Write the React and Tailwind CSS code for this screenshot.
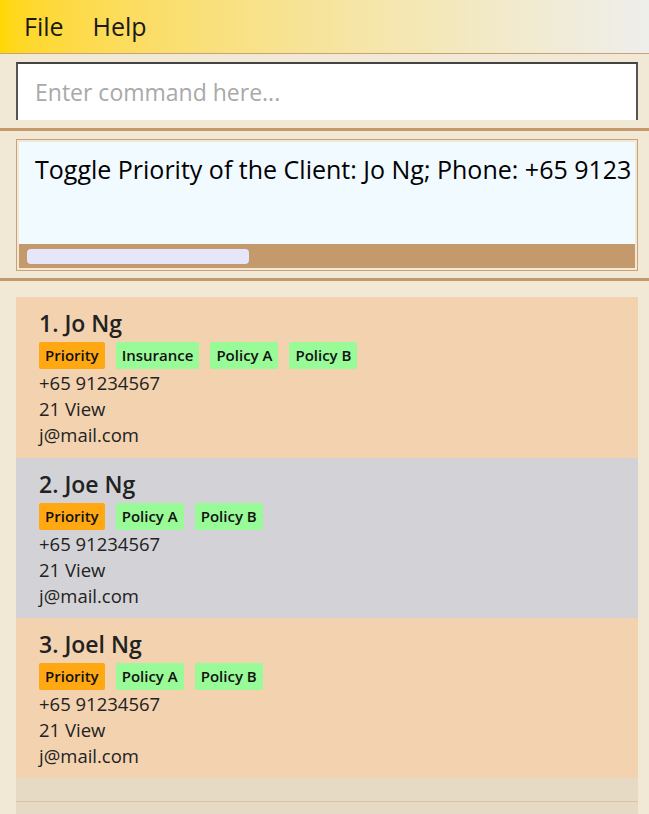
import React from "react"

const clients = [
  { name: "Jo Ng", tags: ["Insurance", "Policy A", "Policy B"], bg: "bg-[#F3D2B0]", h: "h-[161px]" },
  { name: "Joe Ng", tags: ["Policy A", "Policy B"], bg: "bg-[#D3D3D7]", h: "h-[160px]" },
  { name: "Joel Ng", tags: ["Policy A", "Policy B"], bg: "bg-[#F3D2B0]", h: "h-[160px]" },
]

const font = { fontFamily: '"Segoe UI", "Open Sans", sans-serif' }

const ClientCard = ({ index, client }) => (
  <div className={`shrink-0 pl-[23px] pt-[10px] text-[#222222] ${client.h} ${client.bg}`}>
    <div className="h-[32px] text-[23px] font-semibold leading-[32px]">
      {index}. {client.name}
    </div>
    <div className="mt-[3px] flex gap-[11px]">
      <span className="h-[27px] rounded-[2px] bg-[#FFA812] px-[6px] text-[15px] font-semibold leading-[27px] text-[#111111]">
        Priority
      </span>
      {client.tags.map((tag) => (
        <span
          key={tag}
          className="h-[27px] rounded-[2px] bg-[#98FB98] px-[6px] text-[15px] font-semibold leading-[27px] text-[#111111]"
        >
          {tag}
        </span>
      ))}
    </div>
    <div className="mt-[1px] text-[18.5px] leading-[26px]">
      <div>+65 91234567</div>
      <div>21 View</div>
      <div>j@mail.com</div>
    </div>
  </div>
)

export default function App() {
  return (
    <div className="flex h-[814px] w-[649px] flex-col overflow-hidden bg-[#F1E9D6]" style={font}>
      {/* Menu bar */}
      <div className="flex h-[54px] shrink-0 items-center gap-[29px] border-b border-[#C9A27A] bg-gradient-to-r from-[#FFD700] to-[#EEEEEC] pl-[24px] text-[25px] text-[#1a1a1a]">
        <span>File</span>
        <span>Help</span>
      </div>

      {/* Command box */}
      <div className="shrink-0 pb-[8px] pl-[16px] pr-[11px] pt-[8px]">
        <div className="flex h-[58px] items-center border-l-2 border-r-2 border-t-2 border-l-[#555555] border-r-[#555555] border-t-[#444444] bg-white pl-[17px] text-[23px] text-[#A9A9A9]">
          Enter command here...
        </div>
      </div>
      <div className="h-[3px] shrink-0 bg-[#C49A6C]" />

      {/* Result display */}
      <div className="shrink-0 pb-[7px] pl-[16px] pr-[11px] pt-[8px]">
        <div className="border border-[#C9A27A] bg-[#F1E9D6] p-[2px]">
          <div className="h-[102px] overflow-hidden whitespace-nowrap bg-[#F0FAFF] pl-[16px] pt-[10px] text-[25px] leading-[34px] text-black">
            Toggle Priority of the Client: Jo Ng; Phone: +65 9123
          </div>
          <div className="flex h-[24px] items-center bg-[#C49A6C] px-[8px]">
            <div className="h-[15px] w-[222px] rounded-[4px] bg-[#E6E6FA]" />
          </div>
        </div>
      </div>
      <div className="h-[3px] shrink-0 bg-[#C49A6C]" />

      {/* Client list */}
      <div className="flex min-h-0 flex-1 flex-col pl-[16px] pr-[11px] pt-[16px]">
        {clients.map((c, i) => (
          <ClientCard key={c.name} index={i + 1} client={c} />
        ))}
        <div className="h-[24px] shrink-0 border-b border-[#DCC3A4] bg-[#E6DAC4]" />
        <div className="flex-1 bg-[#E6DAC4]" />
      </div>
    </div>
  )
}
